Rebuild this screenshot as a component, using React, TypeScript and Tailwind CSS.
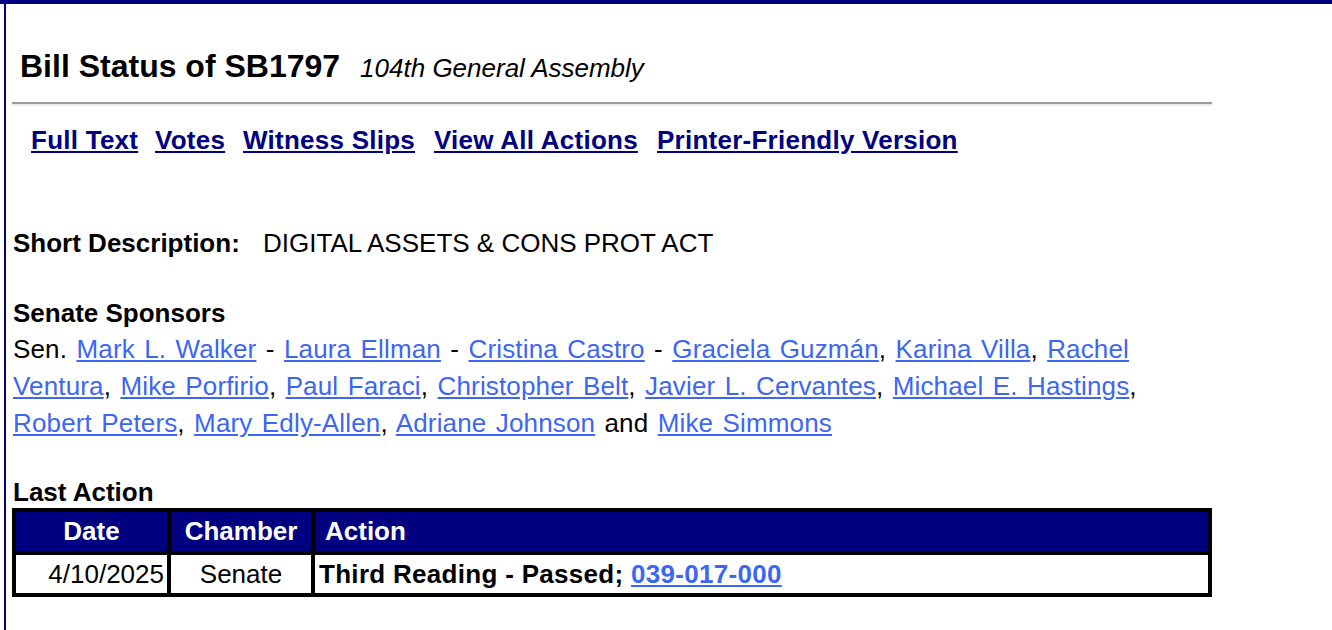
import React from 'react';

// each inner array is one printed line of the sponsor list
const sponsorLines: { name: string; after: string }[][] = [
  [
    { name: 'Mark L. Walker', after: ' - ' },
    { name: 'Laura Ellman', after: ' - ' },
    { name: 'Cristina Castro', after: ' - ' },
    { name: 'Graciela Guzmán', after: ', ' },
    { name: 'Karina Villa', after: ', ' },
  ],
  [
    { name: 'Mike Porfirio', after: ', ' },
    { name: 'Paul Faraci', after: ', ' },
    { name: 'Christopher Belt', after: ', ' },
    { name: 'Javier L. Cervantes', after: ', ' },
    { name: 'Michael E. Hastings', after: ',' },
  ],
  [
    { name: 'Robert Peters', after: ', ' },
    { name: 'Mary Edly-Allen', after: ', ' },
    { name: 'Adriane Johnson', after: ' and ' },
    { name: 'Mike Simmons', after: '' },
  ],
];

const navLinks: { label: string; w: string }[] = [
  { label: 'Full Text', w: 'w-[124px]' },
  { label: 'Votes', w: 'w-[88px]' },
  { label: 'Witness Slips', w: 'w-[191px]' },
  { label: 'View All Actions', w: 'w-[223px]' },
  { label: 'Printer-Friendly Version', w: '' },
];

const SponsorLink: React.FC<{ children: React.ReactNode }> = ({ children }) => (
  <a href="#" className="text-[#3d66f2] underline">
    {children}
  </a>
);

export default function App() {
  return (
    <div className="h-screen overflow-hidden bg-white border-t-4 border-[#000080] font-['Liberation_Sans',Arial,sans-serif] text-black">
      <div className="ml-[4px] h-full border-l-2 border-[#000080] pl-[6px] pt-[43px]">
        <div className="w-[1200px]">
          <h1 className="pl-[8px] text-[32px] leading-[38px] font-bold">
            Bill Status of SB1797
            <span className="ml-[20px] text-[26px] font-normal italic">104th General Assembly</span>
          </h1>

          <hr className="mt-[15px] h-0 border-0 border-t-2 border-b-2 border-t-[#9a9a9a] border-b-[#ececec]" />

          <div className="mt-[16px] flex pl-[19px] text-[26px] leading-[36px] font-bold tracking-[0.25px]">
            {navLinks.map((l) => (
              <span key={l.label} className={l.w}>
                <a href="#" className="text-[#000080] underline">
                  {l.label}
                </a>
              </span>
            ))}
          </div>

          <div className="mt-[67px] pl-[1px] text-[26px] leading-[36px]">
            <span className="inline-block w-[250px] font-bold">Short Description:</span>
            <span>DIGITAL ASSETS &amp; CONS PROT ACT</span>
          </div>

          <div className="mt-[34px] pl-[1px] text-[26px] leading-[36px] font-bold">Senate Sponsors</div>
          <p className="whitespace-nowrap pl-[1px] text-[26px] leading-[37px] tracking-[0.15px] [word-spacing:2px]">
            Sen.{' '}
            {sponsorLines[0].map((s) => (
              <React.Fragment key={s.name}>
                <SponsorLink>{s.name}</SponsorLink>
                {s.after}
              </React.Fragment>
            ))}
            <SponsorLink>
              Rachel
              <br />
              Ventura
            </SponsorLink>
            {', '}
            {sponsorLines[1].map((s) => (
              <React.Fragment key={s.name}>
                <SponsorLink>{s.name}</SponsorLink>
                {s.after}
              </React.Fragment>
            ))}
            <br />
            {sponsorLines[2].map((s) => (
              <React.Fragment key={s.name}>
                <SponsorLink>{s.name}</SponsorLink>
                {s.after}
              </React.Fragment>
            ))}
          </p>

          <div className="mt-[34px] pl-[1px] text-[26px] leading-[32px] font-bold">Last Action</div>

          <div className="border-4 border-black text-[26px]">
            <div className="flex h-[39px] items-center bg-[#000080] font-bold text-white">
              <div className="w-[151px] text-center">Date</div>
              <div className="flex h-full w-[144px] items-center justify-center border-l-4 border-black">Chamber</div>
              <div className="flex h-full flex-1 items-center border-l-4 border-black pl-[10px]">Action</div>
            </div>
            <div className="flex h-[42px] items-center border-t-4 border-black">
              <div className="w-[151px] pr-[3px] text-right">4/10/2025</div>
              <div className="flex h-full w-[144px] items-center justify-center border-l-4 border-black">Senate</div>
              <div className="flex h-full flex-1 items-center border-l-4 border-black pl-[4px] font-bold tracking-[0.3px]">
                Third Reading - Passed;&nbsp;
                <a href="#" className="text-[#3d66f2] underline">
                  039-017-000
                </a>
              </div>
            </div>
          </div>
        </div>
      </div>
    </div>
  );
}
